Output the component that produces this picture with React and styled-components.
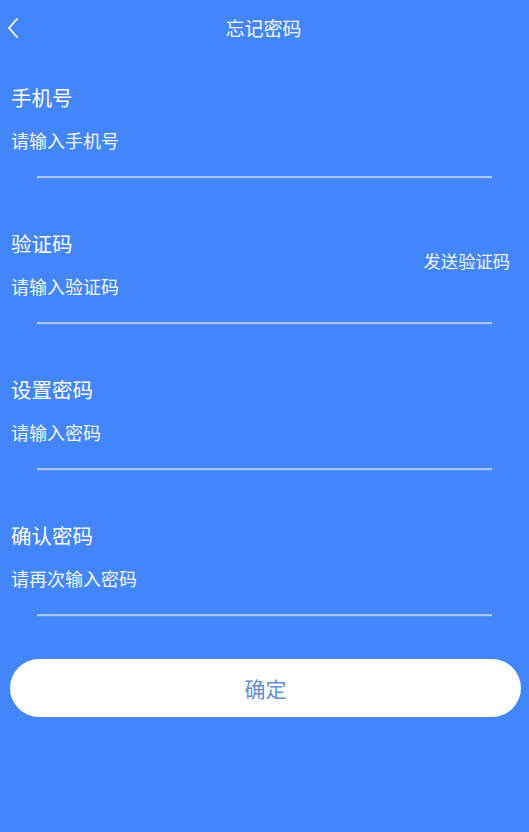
import React from "react";
import styled, { createGlobalStyle } from "styled-components";

const GlobalStyle = createGlobalStyle`
  html, body {
    margin: 0;
    padding: 0;
    background: #4386fc;
  }
  body {
    font-family: "Noto Sans CJK SC", "Noto Sans", sans-serif;
  }
`;

const Page = styled.div`
  width: 529px;
  min-height: 832px;
  background: #4386fc;
  color: #fff;
`;

const Header = styled.header`
  position: relative;
  height: 54px;
  display: flex;
  align-items: center;
  justify-content: center;
`;

const BackButton = styled.button`
  position: absolute;
  left: 3px;
  top: 15px;
  width: 20px;
  height: 26px;
  padding: 0;
  border: none;
  background: transparent;
  display: flex;
  align-items: center;
  justify-content: center;
`;

const Title = styled.h1`
  margin: 0 0 0 -2px;
  font-size: 19px;
  font-weight: 400;
  color: #f4f8ff;
`;

const Form = styled.div`
  display: flex;
  flex-direction: column;
  gap: 51px;
  padding: 29px 11px 0;
`;

const Field = styled.div`
  display: flex;
  flex-direction: column;
`;

const Row = styled.div`
  display: flex;
  align-items: center;
  justify-content: space-between;
`;

const Texts = styled.div`
  display: flex;
  flex-direction: column;
  gap: 17px;
`;

const Label = styled.div`
  font-size: 20.5px;
  line-height: 28px;
  color: #fff;
`;

const Placeholder = styled.div`
  font-size: 18px;
  line-height: 24px;
  color: #f2f6ff;
`;

const SendCode = styled.span`
  font-size: 17.3px;
  color: #eef4ff;
  margin-right: 8px;
  margin-top: -6px;
`;

const Divider = styled.div`
  height: 2px;
  margin: 24px 26px 0;
  background: #a8c6fb;
  box-shadow: 0 1px 1px rgba(120, 160, 230, 0.5);
`;

const Submit = styled.button`
  display: block;
  width: 511px;
  height: 58px;
  margin: 43px 0 0 10px;
  border: none;
  border-radius: 29px;
  background: #fff;
  color: #5f8ed6;
  font-family: "Noto Sans CJK SC", "Noto Sans", sans-serif;
  font-size: 21px;
`;

const fields = [
  { label: "手机号", placeholder: "请输入手机号" },
  { label: "验证码", placeholder: "请输入验证码", send: true },
  { label: "设置密码", placeholder: "请输入密码" },
  { label: "确认密码", placeholder: "请再次输入密码" },
];

export default function App() {
  return (
    <Page>
      <GlobalStyle />
      <Header>
        <BackButton>
          <svg width="14" height="22" viewBox="0 0 14 22" fill="none">
            <path d="M11 2 L3 11 L11 20" stroke="#fff" strokeWidth="1.8" strokeLinecap="round" strokeLinejoin="round" />
          </svg>
        </BackButton>
        <Title>忘记密码</Title>
      </Header>
      <Form>
        {fields.map((f) => (
          <Field key={f.label}>
            <Row>
              <Texts>
                <Label>{f.label}</Label>
                <Placeholder>{f.placeholder}</Placeholder>
              </Texts>
              {f.send && <SendCode>发送验证码</SendCode>}
            </Row>
            <Divider />
          </Field>
        ))}
      </Form>
      <Submit>确定</Submit>
    </Page>
  );
}
